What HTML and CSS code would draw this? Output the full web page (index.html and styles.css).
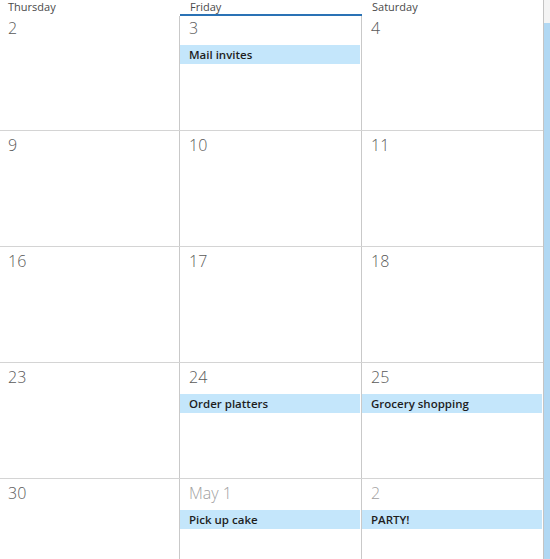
FILE: index.html
```html
<!DOCTYPE html>
<html>
<head>
<meta charset="utf-8">
<link rel="stylesheet" href="styles.css">
</head>
<body>
<div class="cal">
  <div class="main">
    <div class="head">
      <div class="hd">Thursday</div>
      <div class="hd today">Friday</div>
      <div class="hd">Saturday</div>
    </div>
    <div class="body">
      <div class="row first">
        <div class="cell"><div class="num">2</div></div>
        <div class="cell"><div class="num">3</div><div class="ev">Mail invites</div></div>
        <div class="cell"><div class="num">4</div></div>
      </div>
      <div class="row">
        <div class="cell"><div class="num">9</div></div>
        <div class="cell"><div class="num">10</div></div>
        <div class="cell"><div class="num">11</div></div>
      </div>
      <div class="row">
        <div class="cell"><div class="num">16</div></div>
        <div class="cell"><div class="num">17</div></div>
        <div class="cell"><div class="num">18</div></div>
      </div>
      <div class="row">
        <div class="cell"><div class="num">23</div></div>
        <div class="cell"><div class="num">24</div><div class="ev">Order platters</div></div>
        <div class="cell"><div class="num">25</div><div class="ev">Grocery shopping</div></div>
      </div>
      <div class="row last">
        <div class="cell"><div class="num">30</div></div>
        <div class="cell"><div class="num other">May 1</div><div class="ev">Pick up cake</div></div>
        <div class="cell"><div class="num other">2</div><div class="ev">PARTY!</div></div>
      </div>
    </div>
  </div>
  <div class="scroll"><div class="track"></div><div class="thumb"></div></div>
</div>
</body>
</html>
```

FILE: styles.css
```css
html, body {
  margin: 0;
  padding: 0;
  background: #fff;
}
body {
  font-family: "Open Sans", "Noto Sans", sans-serif;
  width: 550px;
  height: 559px;
  overflow: hidden;
}
.cal {
  display: flex;
  height: 559px;
}
.main {
  width: 543px;
  display: flex;
  flex-direction: column;
}
.head {
  display: grid;
  grid-template-columns: 180px 182px 181px;
  height: 16px;
}
.hd {
  font-size: 11px;
  line-height: 13px;
  color: #4a4a4a;
  padding-left: 8px;
  height: 14px;
}
.hd.today {
  padding-left: 10px;
  border-bottom: 2px solid #2a72b5;
}
.hd:nth-child(3) { padding-left: 10px; }
.row {
  display: grid;
  grid-template-columns: 179px 182px 182px;
  height: 116px;
  border-top: 1px solid #d4d4d4;
  box-sizing: border-box;
}
.row.first {
  border-top: none;
  height: 114px;
}
.row.last { height: 81px; }
.cell {
  border-left: 1px solid #c9c9c9;
  padding-top: 4px;
}
.cell:first-child { border-left: none; }
.row.first .cell { padding-top: 2px; }
.num {
  font-size: 16px;
  line-height: 20px;
  font-weight: 300;
  color: #595959;
  padding-left: 8px;
  margin-bottom: 7px;
}
.cell + .cell .num { padding-left: 9px; }
.num.other { color: #a0a0a0; }
.ev {
  background: #c4e6fb;
  height: 19px;
  line-height: 19px;
  font-size: 11.5px;
  font-weight: 600;
  color: #1e1e1e;
  padding-left: 9px;
  margin-right: 1px;
}
.scroll {
  width: 7px;
  border-left: 1px solid #c4c4c4;
  display: flex;
  flex-direction: column;
}
.track {
  height: 23px;
  background: #f4f4f4;
}
.thumb {
  flex: 1;
  background: #b1d8f3;
}
```
